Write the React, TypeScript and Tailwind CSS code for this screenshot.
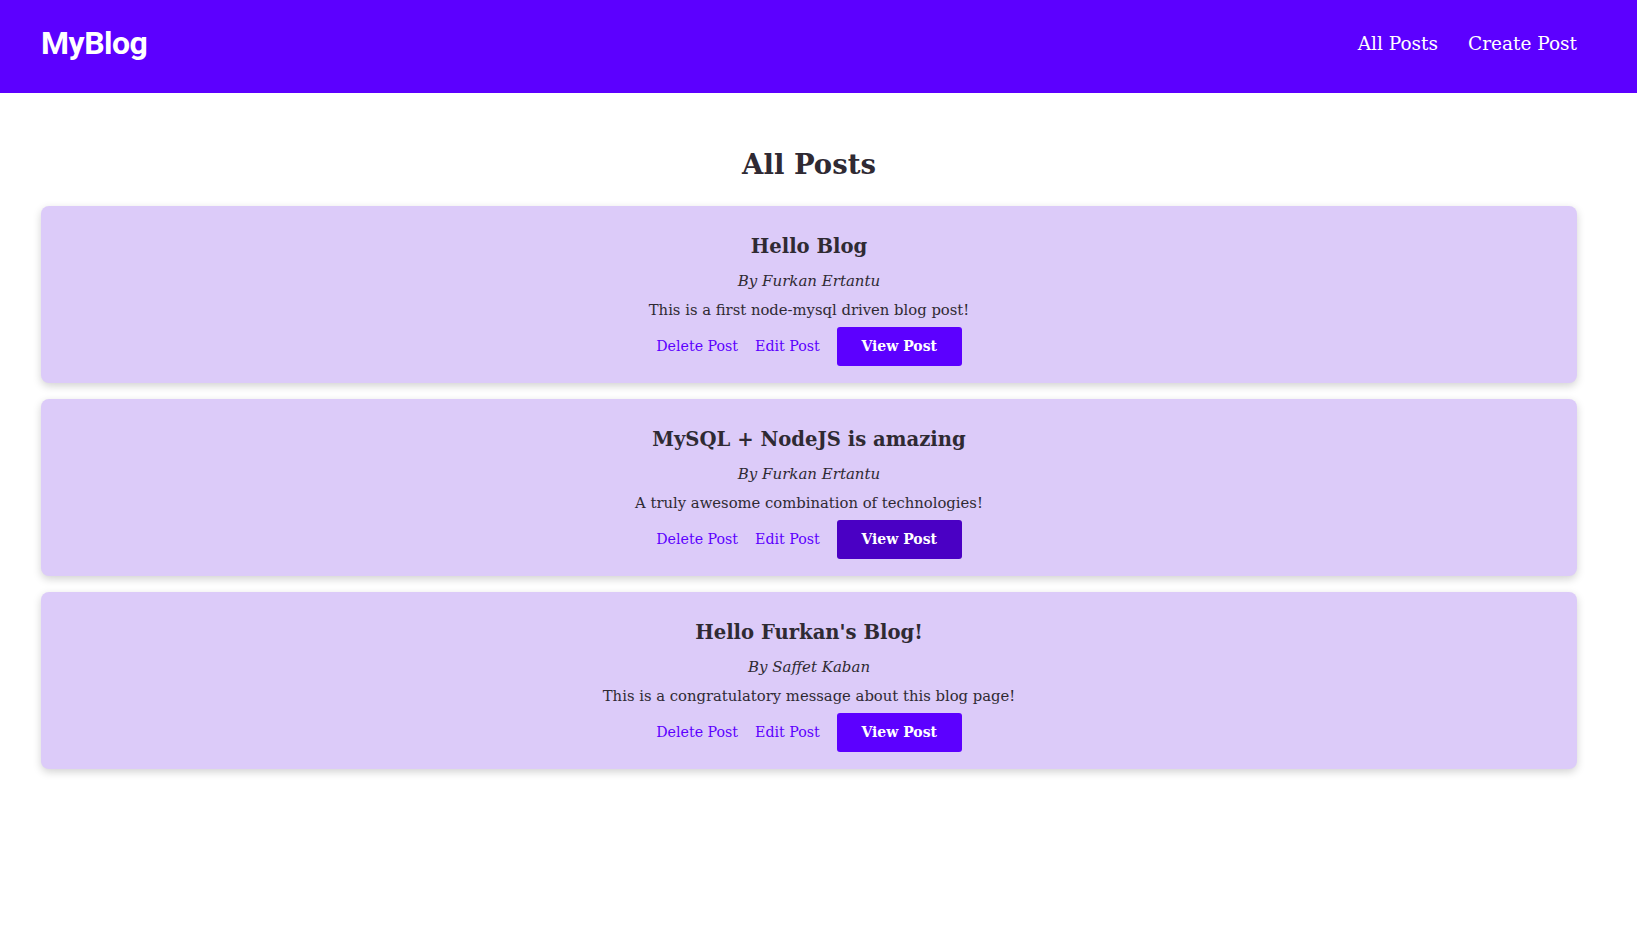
const posts = [
  { title: "Hello Blog", author: "Furkan Ertantu", body: "This is a first node-mysql driven blog post!", hover: false },
  { title: "MySQL + NodeJS is amazing", author: "Furkan Ertantu", body: "A truly awesome combination of technologies!", hover: true },
  { title: "Hello Furkan's Blog!", author: "Saffet Kaban", body: "This is a congratulatory message about this blog page!", hover: false },
]

const serif = "font-['DejaVu_Serif',serif]"

function PostCard({ post }: { post: (typeof posts)[number] }) {
  return (
    <div className="bg-[#dccbf9] rounded-[8px] shadow-[0_3px_8px_rgba(0,0,0,0.18)] h-[177px] pt-[24px] flex flex-col items-center text-[#2f2a33]">
      <h2 className="text-[19.6px] leading-[34px] font-bold">{post.title}</h2>
      <p className="italic text-[15px] leading-[26px] mt-[4px]">By {post.author}</p>
      <p className="text-[14.8px] leading-[26px] mt-[3px]">{post.body}</p>
      <div className="flex items-center mt-[4px] text-[14.2px]">
        <a className="text-[#5c00ff] cursor-pointer">Delete Post</a>
        <a className="text-[#5c00ff] ml-[17px] cursor-pointer">Edit Post</a>
        <button className={`ml-[17px] w-[125px] h-[39px] rounded-[3px] text-white font-bold text-[14px] ${post.hover ? "bg-[#4a00c4]" : "bg-[#5c00ff]"}`}>
          View Post
        </button>
      </div>
    </div>
  )
}

export default function App() {
  return (
    <div className={`min-h-[929px] bg-white ${serif}`}>
      <header className="h-[93px] bg-[#5c00ff] pl-[41px] pr-[60px] flex items-center justify-between pb-[8px]">
        <span className="font-['Roboto',sans-serif] font-bold text-[32px] text-white tracking-[-0.5px]">MyBlog</span>
        <nav className="flex gap-[30px] text-white text-[18.5px] pt-[2px]">
          <a className="cursor-pointer">All Posts</a>
          <a className="cursor-pointer">Create Post</a>
        </nav>
      </header>
      <main className="pl-[41px] pr-[60px]">
        <h1 className="text-center font-bold text-[27.5px] leading-[40px] mt-[51px] mb-[22px] text-[#2f2a33]">All Posts</h1>
        <div className="flex flex-col gap-[16px]">
          {posts.map((p) => (
            <PostCard key={p.title} post={p} />
          ))}
        </div>
      </main>
    </div>
  )
}
